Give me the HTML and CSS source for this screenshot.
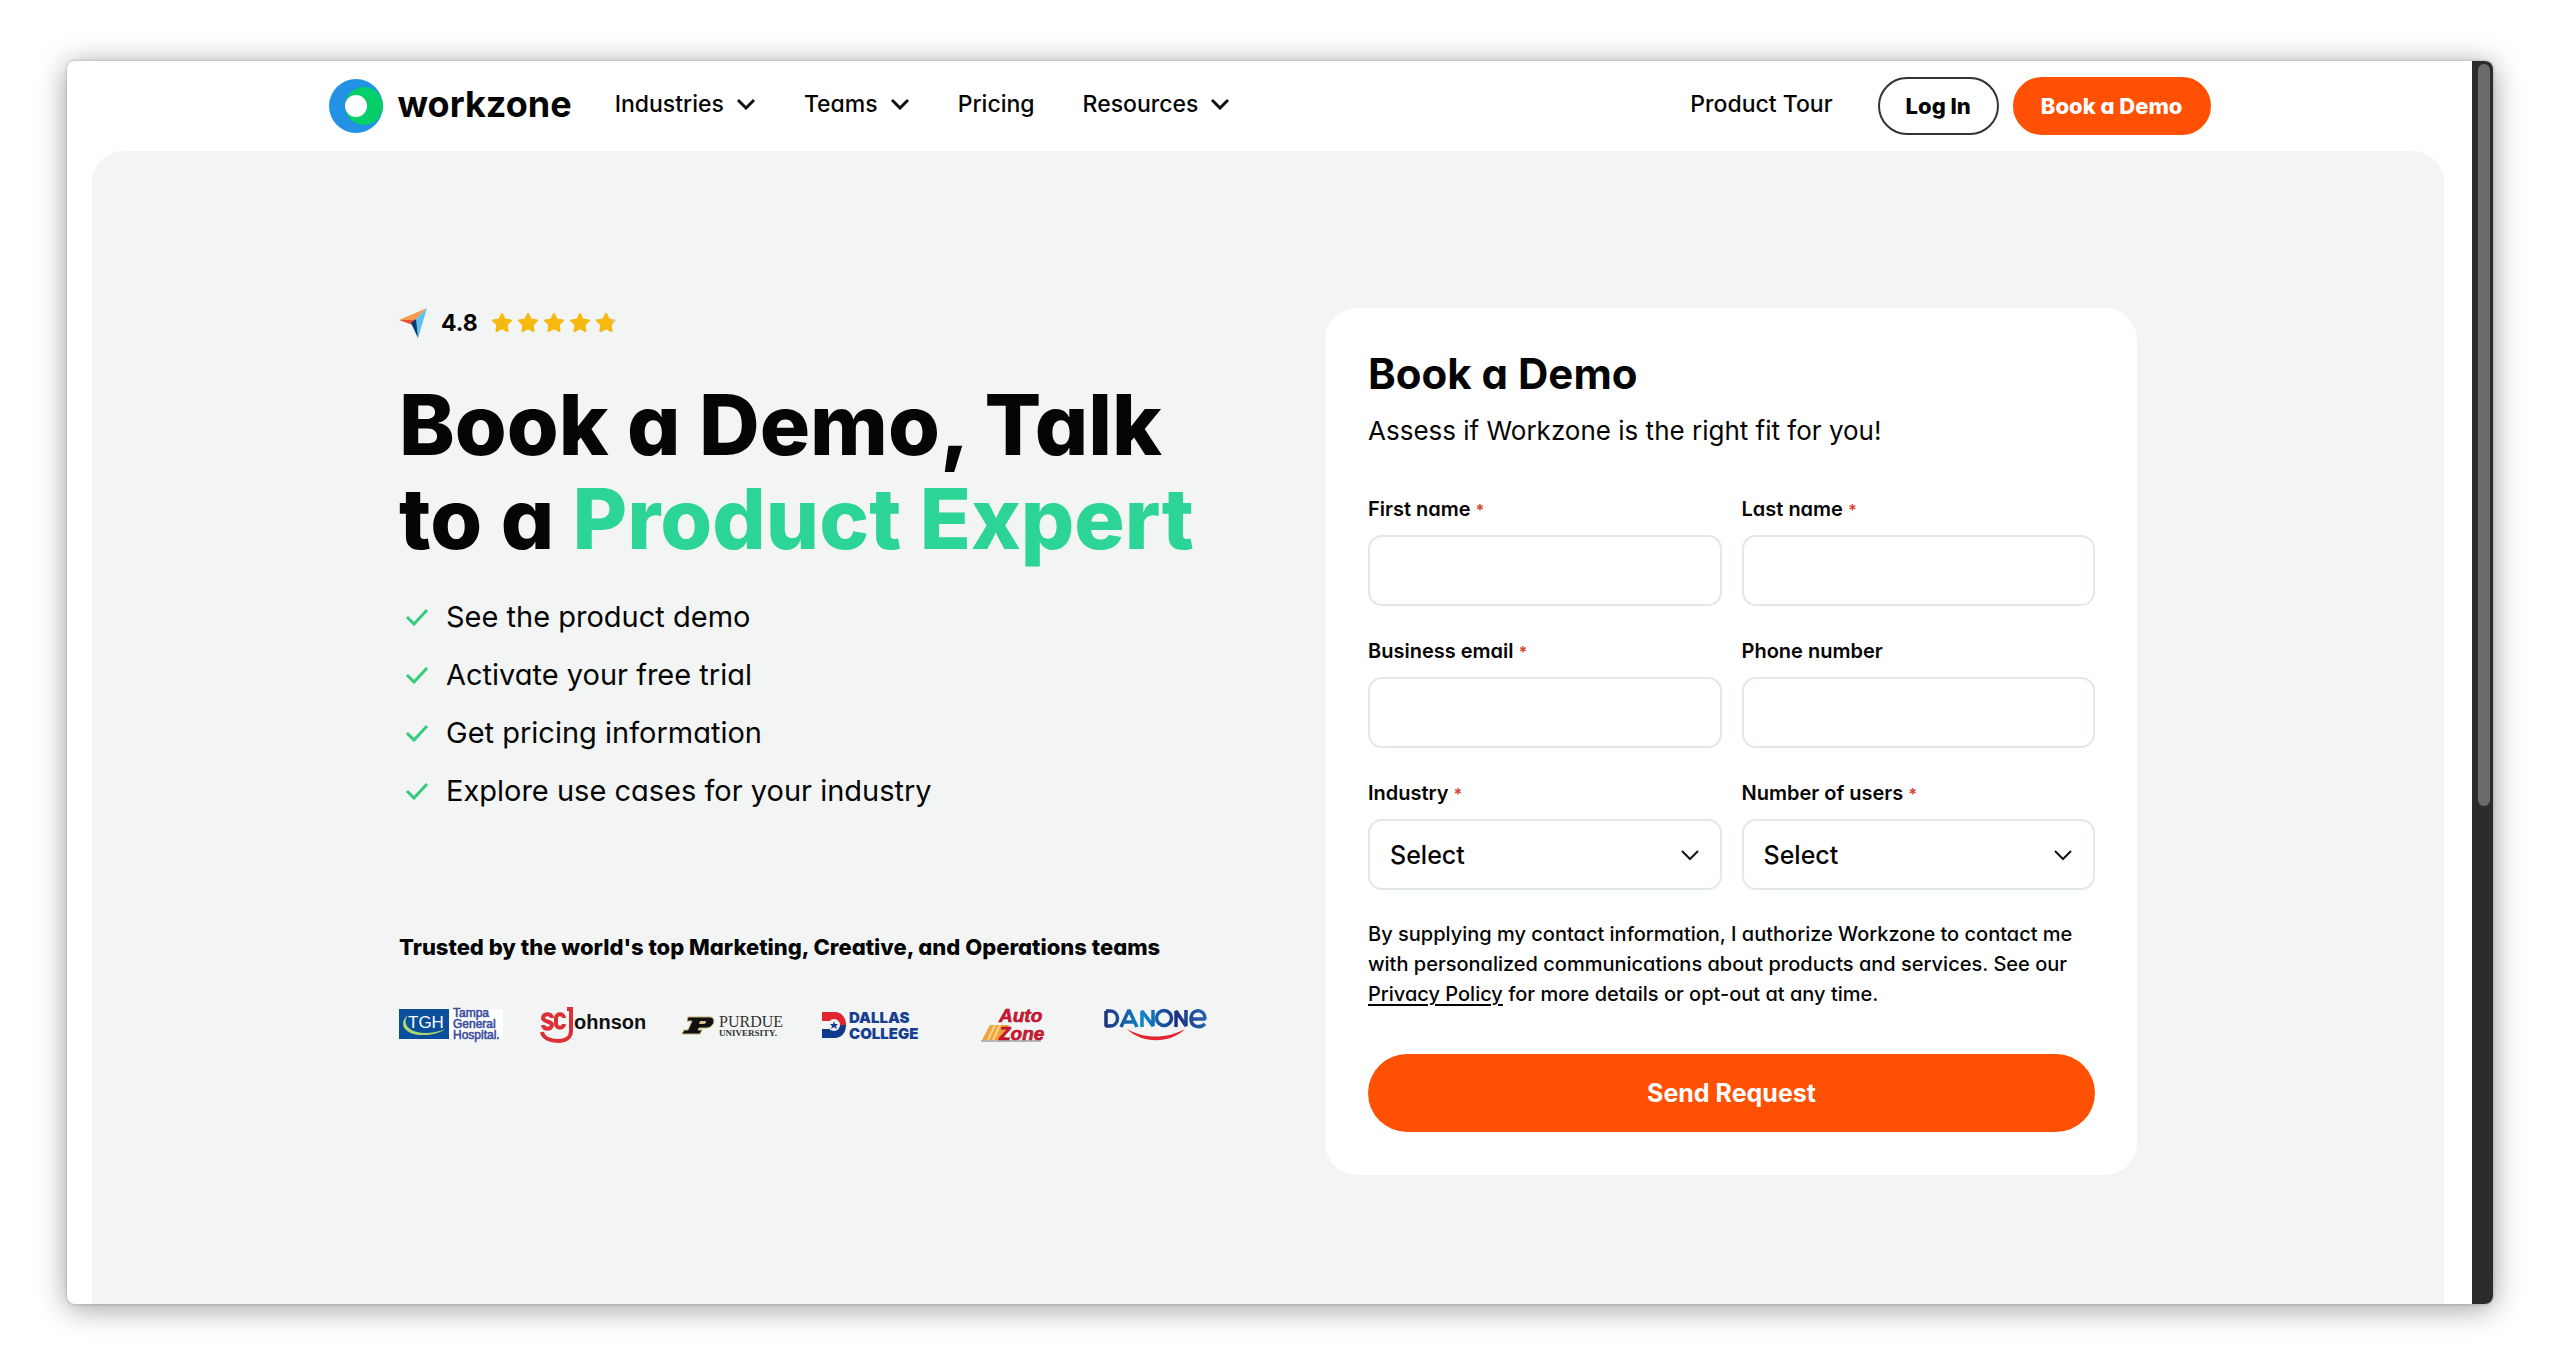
FILE: index.html
```html
<!DOCTYPE html>
<html lang="en">
<head>
<meta charset="utf-8">
<meta name="viewport" content="width=device-width, initial-scale=1">
<title>Book a Demo | Workzone</title>
<link rel="stylesheet" href="styles.css">
</head>
<body>
<div class="window">
  <div class="page">
    <header class="header">
      <a class="brand" href="#">
        <svg class="brand-mark" viewBox="0 0 54 54" aria-hidden="true">
          <circle cx="27" cy="27" r="27" fill="#2492e4"/>
          <circle cx="35" cy="27" r="19" fill="#04cf68"/>
          <circle cx="27" cy="27" r="11" fill="#fff"/>
        </svg>
        <span>workzone</span>
      </a>
      <nav class="nav">
        <a href="#">Industries <svg class="chevron" viewBox="0 0 20 12"><path d="M2 2l8 8 8-8"/></svg></a>
        <a href="#">Teams <svg class="chevron" viewBox="0 0 20 12"><path d="M2 2l8 8 8-8"/></svg></a>
        <a href="#">Pricing</a>
        <a href="#">Resources <svg class="chevron" viewBox="0 0 20 12"><path d="M2 2l8 8 8-8"/></svg></a>
      </nav>
      <div class="actions">
        <a class="tour" href="#">Product Tour</a>
        <button class="pill pill-outline" type="button">Log In</button>
        <button class="pill pill-solid" type="button">Book a Demo</button>
      </div>
    </header>

    <main class="hero">
      <div class="hero-inner">
        <section class="pitch">
          <div class="rating">
            <svg class="rating-mark" viewBox="0 0 28 30" aria-hidden="true">
              <path d="M0 12 28 0 16 12z" fill="#f79a4b"/>
              <path d="M0 12h17l-3 5z" fill="#e8502f"/>
              <path d="M28 0 19 30l-3-18z" fill="#5fc0ea"/>
              <path d="M12 15l5-4 2 19z" fill="#0b3a75"/>
            </svg>
            <strong>4.8</strong>
            <svg class="stars" viewBox="0 0 126 20" role="img" aria-label="4.8 out of 5 stars">
              <defs>
                <path id="star" d="M10 1l2.800 5.600 6.200.900-4.500 4.400 1.100 6.200L10 15.200l-5.600 2.900 1.100-6.200L1 7.500l6.200-.900z" stroke-width="2" stroke-linejoin="round"/>
                <clipPath id="partial"><rect x="104" width="17" height="20"/></clipPath>
              </defs>
              <g fill="#f6b90f" stroke="#f6b90f">
                <use href="#star"/><use href="#star" x="26"/><use href="#star" x="52"/><use href="#star" x="78"/>
              </g>
              <use href="#star" x="104" fill="#cfd2d0" stroke="#cfd2d0"/>
              <g clip-path="url(#partial)"><use href="#star" x="104" fill="#f6b90f" stroke="#f6b90f"/></g>
            </svg>
          </div>
          <h1>Book a Demo, Talk<br>to a <em>Product Expert</em></h1>
          <ul class="benefits">
            <li><svg class="check" viewBox="0 0 24 18"><path d="M2 9l7 7L22 2"/></svg>See the product demo</li>
            <li><svg class="check" viewBox="0 0 24 18"><path d="M2 9l7 7L22 2"/></svg>Activate your free trial</li>
            <li><svg class="check" viewBox="0 0 24 18"><path d="M2 9l7 7L22 2"/></svg>Get pricing information</li>
            <li><svg class="check" viewBox="0 0 24 18"><path d="M2 9l7 7L22 2"/></svg>Explore use cases for your industry</li>
          </ul>
          <h2 class="trusted">Trusted by the world's top Marketing, Creative, and Operations teams</h2>
          <div class="logos">
            <svg viewBox="0 0 104 36" role="img" aria-label="Tampa General Hospital">
              <rect x="50" y="2" width="54" height="30" fill="#fff"/>
              <rect y="2" width="50" height="30" fill="#0b4f9c"/>
              <path d="M9 8C-2 17 6 28 24 28c9 0 17-2 22-6-9 4-20 5-28 3C7 22 4 15 9 8z" fill="#a9d86e"/>
              <text x="9" y="21" font-size="17" fill="#fff" class="logo-sans">TGH</text>
              <g font-size="12" fill="#3d4f9f" stroke="#3d4f9f" stroke-width=".6" class="logo-sans"><text x="54" y="10">Tampa</text><text x="54" y="21">General</text><text x="54" y="32">Hospital.</text></g>
            </svg>
            <svg viewBox="0 0 104 36" role="img" aria-label="SC Johnson">
              <g fill="none" stroke="#dc2f38" stroke-width="4">
                <path d="M12 11c0-5-9-5-9 0 0 4 9 3 9 7 0 5-9 5-9 0"/>
                <path d="M24 11c0-5-8-5-8 0v6c0 5 8 5 8 0"/>
                <path d="M27 2h4v22c0 7-6 10-13 10-8 0-15-3-16-9"/>
              </g>
              <text x="34" y="22" font-size="20" font-weight="700" fill="#111" class="logo-sans">ohnson</text>
            </svg>
            <svg viewBox="0 0 104 36" role="img" aria-label="Purdue University">
              <path d="M7 10h22c6 0 5 10-3 11h-8l-1 2h4l-2 4H1l2-4h4l4-9H6z" fill="#111" stroke="#c9ae74"/>
              <path d="M19 14h5c2 0 1 3-1 3h-5z" fill="#d8c08a"/>
              <g fill="#333" class="logo-serif"><text x="38" y="20" font-size="16">PURDUE</text><text x="38" y="29" font-size="9" font-weight="700">UNIVERSITY.</text></g>
            </svg>
            <svg viewBox="0 0 104 36" role="img" aria-label="Dallas College">
              <path d="M0 5h13c6 0 11 5 11 13H0z" fill="#e1262f"/>
              <path d="M0 18h24c0 8-5 13-11 13H0z" fill="#123a8c"/>
              <rect y="14" width="7" height="8" fill="#f2f5f4"/><circle cx="12" cy="18" r="6" fill="#f2f5f4"/><path d="M12 14l1 3h3l-2 2 1 3-3-2-3 2 1-3-2-2h3z" fill="#123a8c"/>
              <g font-size="15" font-weight="900" fill="#173e91" class="logo-inter"><text x="27" y="16">DALLAS</text><text x="27" y="32">COLLEGE</text></g>
            </svg>
            <svg viewBox="0 0 104 36" role="img" aria-label="AutoZone">
              <path d="M27 18l-8 15h22l5-15z" fill="#f1a33b"/>
              <path d="M32 18l-7 15M37 18l-7 15" stroke="#fbd58b" stroke-width="2"/>
              <path d="M18 34h60" stroke="#777"/>
              <g font-size="19" font-weight="700" font-style="italic" fill="#dc1531" stroke="#9b1027" stroke-width=".6" class="logo-sans"><text x="36" y="15">Auto</text><text x="36" y="33">Zone</text></g>
            </svg>
            <svg viewBox="0 0 104 36" role="img" aria-label="Danone">
              <defs><linearGradient id="danone" gradientUnits="userSpaceOnUse" x1="0" y1="0" x2="104" y2="0"><stop offset="0" stop-color="#1c2f80"/><stop offset=".38" stop-color="#1087cb"/><stop offset=".7" stop-color="#1c2f80"/><stop offset="1" stop-color="#2567b3"/></linearGradient></defs>
              <g fill="none" stroke="url(#danone)" stroke-width="3.500" stroke-linejoin="bevel">
                <path d="M2 4v15h4c10 0 10-15 0-15H2"/>
                <path d="M17 20l8-17 8 17M20 15h10"/>
                <path d="M38 20V4l11 15V3"/>
                <circle cx="60" cy="11" r="7.500"/>
                <path d="M72 20V4l10 15V3"/>
                <path d="M88 12h13c0-11-14-11-14 0 0 9 10 9 14 5"/>
              </g>
              <path d="M23 22c17 10 40 10 58 0-15 15-43 15-58 0z" fill="#e4272f"/>
            </svg>
          </div>
        </section>

        <form class="card">
          <h2>Book a Demo</h2>
          <p class="lead">Assess if Workzone is the right fit for you!</p>
          <div class="fields">
            <div class="field"><label for="first">First name <b>*</b></label><input id="first" type="text"></div>
            <div class="field"><label for="last">Last name <b>*</b></label><input id="last" type="text"></div>
            <div class="field"><label for="email">Business email <b>*</b></label><input id="email" type="email"></div>
            <div class="field"><label for="phone">Phone number</label><input id="phone" type="tel"></div>
            <div class="field"><label for="industry">Industry <b>*</b></label>
              <div class="select"><select id="industry"><option>Select</option></select><svg class="chevron" viewBox="0 0 20 12"><path d="M2 2l8 8 8-8"/></svg></div></div>
            <div class="field"><label for="users">Number of users <b>*</b></label>
              <div class="select"><select id="users"><option>Select</option></select><svg class="chevron" viewBox="0 0 20 12"><path d="M2 2l8 8 8-8"/></svg></div></div>
          </div>
          <p class="consent">By supplying my contact information, I authorize Workzone to contact me with personalized communications about products and services. See our <a href="#">Privacy Policy</a> for more details or opt-out at any time.</p>
          <button class="send" type="submit">Send Request</button>
        </form>
      </div>
    </main>
  </div>
  <div class="scrollbar"><div class="thumb"></div></div>
</div>
</body>
</html>
```
FILE: styles.css
```css
* { box-sizing: border-box; }

body {
  margin: 0;
  min-height: 100vh;
  padding: 61px 67px;
  display: flex;
  background: #fff;
  color: #050505;
  font-family: Inter, "Open Sans", sans-serif;
  font-feature-settings: "cv11";
}

a { color: inherit; text-decoration: none; }
h1, h2, p, ul { margin: 0; padding: 0; }
button, input, select { font: inherit; color: inherit; font-feature-settings: inherit; }

.window {
  flex: 1;
  display: flex;
  overflow: hidden;
  border-radius: 8px;
  background: #fff;
  box-shadow: 0 4px 30px rgba(0, 0, 0, .4), 0 0 3px rgba(0, 0, 0, .25);
}

.page { flex: 1; display: flex; flex-direction: column; min-width: 0; }

.header {
  width: 100%;
  max-width: 1882px;
  height: 90px;
  margin: 0 auto;
  display: flex;
  align-items: center;
  font-size: 23px;
  font-weight: 500;
}

.brand { display: flex; align-items: center; gap: 15px; font-size: 36px; font-weight: 700; line-height: 40px; }
.brand span { padding-bottom: 5px; }
.brand-mark { width: 54px; height: 54px; }

.nav { display: flex; gap: 48px; margin-left: 43px; padding-bottom: 4px; }
.nav a { display: flex; align-items: center; gap: 12px; }
.chevron { width: 20px; height: 12px; fill: none; stroke: #111; stroke-width: 3; flex: none; }

.actions { display: flex; align-items: center; gap: 14px; margin-left: auto; }
.tour { margin-right: 31px; padding-bottom: 4px; }
.pill { height: 58px; padding: 0 26px; border-radius: 29px; font-size: 22px; font-weight: 800; border: 2px solid #333; background: #fff; white-space: nowrap; }
.pill-solid { background: #ff5003; border-color: #ff5003; color: #fff; }

.hero {
  flex: 1;
  margin: 0 28px 0 25px;
  padding: 157px 24px 120px;
  border-radius: 32px 32px 0 0;
  background: #f2f5f4;
}

.hero-inner {
  max-width: 1738px;
  margin: 0 auto;
  display: grid;
  grid-template-columns: minmax(0, 1fr) minmax(0, 812px);
  gap: 64px;
}

.rating { display: flex; align-items: center; gap: 14px; height: 30px; font-size: 23px; }
.rating-mark { width: 28px; height: 30px; }
.stars { width: 126px; height: 20px; }

h1 { margin-top: 40px; font-size: 84px; line-height: 94px; font-weight: 800; white-space: nowrap; }
h1 em { font-style: normal; color: #2cd596; }

.benefits { margin-top: 34px; padding-left: 6px; list-style: none; font-size: 29px; line-height: 34px; display: grid; gap: 24px; }
.benefits li { display: flex; align-items: center; gap: 17px; }
.check { width: 24px; height: 18px; fill: none; stroke: #32cc7b; stroke-width: 3; }

.trusted { margin-top: 125px; font-size: 22px; line-height: 28px; font-weight: 800; }
.logos { display: flex; gap: 37px; margin-top: 46px; }
.logos svg { width: 104px; height: 36px; overflow: visible; }
.logo-sans { font-family: "Liberation Sans Narrow", "Liberation Sans", sans-serif; }
.logo-serif { font-family: "Liberation Serif", serif; }
.logo-inter { font-family: Inter, sans-serif; }

.card { padding: 42px 42px 43px 43px; border-radius: 32px; background: #fff; }
.card h2 { font-size: 42px; line-height: 48px; font-weight: 700; }
.lead { margin-top: 18px; font-size: 26px; line-height: 30px; }

.fields { margin-top: 51px; display: grid; grid-template-columns: 1fr 1fr; gap: 33px 20px; }
.field { min-width: 0; }
.field label { display: block; height: 38px; font-size: 20px; line-height: 24px; font-weight: 600; }
.field b { color: #d8452f; font-size: 16px; font-weight: 700; }
.field input, .field select { display: block; width: 100%; height: 71px; padding: 0 20px; border: 2px solid #e2e8e6; border-radius: 14px; background: #fff; font-size: 25px; font-weight: 500; }
.select { position: relative; }
.field select { appearance: none; }
.select .chevron { position: absolute; right: 22px; top: 30px; stroke-width: 2; pointer-events: none; }

.consent { margin-top: 29px; font-size: 20px; line-height: 30px; font-weight: 500; }
.consent a { text-decoration: underline; text-underline-offset: 3px; }
.send { display: block; width: 100%; height: 78px; margin-top: 45px; border: 0; border-radius: 39px; background: #ff5003; color: #fff; font-size: 25px; font-weight: 700; }

.scrollbar { width: 21px; padding: 3px 3px 3px 6px; background: #2c2c2c; }
.thumb { height: 60%; border-radius: 6px; background: #6b6b6b; }
```
